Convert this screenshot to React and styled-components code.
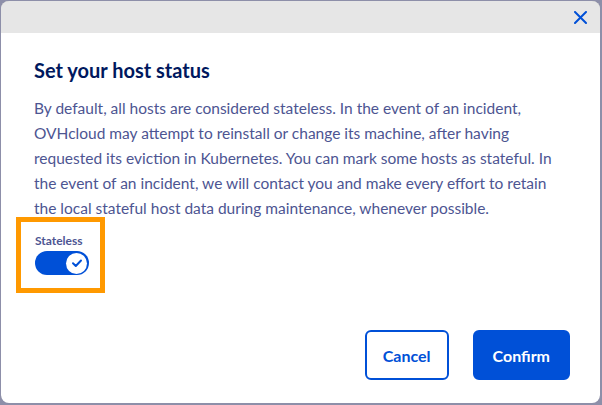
import styled, { createGlobalStyle } from "styled-components";

const GlobalStyle = createGlobalStyle`
  html, body {
    margin: 0;
    padding: 0;
    background: #8d8fa9;
    font-family: Lato, "Open Sans", sans-serif;
  }
`;

const Backdrop = styled.div`
  width: 602px;
  height: 405px;
  padding: 1px 2px 2px 1px;
  box-sizing: border-box;
`;

const Modal = styled.div`
  width: 599px;
  height: 402px;
  background: #fff;
  border-radius: 8px;
  overflow: hidden;
  display: flex;
  flex-direction: column;
  box-shadow: inset 0 1px 0 #9a9a9a;
`;

const Header = styled.div`
  height: 32px;
  background: #e6e6e6;
  display: flex;
  justify-content: flex-end;
  align-items: center;
  padding: 0 12px;
`;

const CloseButton = styled.button`
  border: 0;
  background: none;
  padding: 0;
  width: 16px;
  height: 16px;
  display: flex;
  align-items: center;
  justify-content: center;
  cursor: pointer;
`;

const Content = styled.div`
  flex: 1;
  padding: 23px 33px 0;
  display: flex;
  flex-direction: column;
`;

const Title = styled.h2`
  margin: 0 0 12px;
  font-size: 20px;
  font-weight: 700;
  color: #00185e;
  line-height: 28px;
`;

const Text = styled.p`
  margin: 0;
  font-size: 15.5px;
  line-height: 25px;
  color: #4d5592;
`;

const Highlight = styled.div`
  align-self: flex-start;
  margin: -4px 0 0 -18px;
  padding: 12px 11px 13px 14px;
  border: 5px solid #ff9900;
  display: flex;
  flex-direction: column;
  gap: 3px;
`;

const Label = styled.span`
  font-size: 12px;
  font-weight: 700;
  color: #4d5592;
  line-height: 14px;
`;

const Switch = styled.div`
  width: 54px;
  height: 24px;
  border-radius: 12px;
  background: ${(p) => (p.$on ? "#0050d7" : "#b3b3b3")};
  display: flex;
  align-items: center;
  justify-content: ${(p) => (p.$on ? "flex-end" : "flex-start")};
  padding: 0 2px;
  box-sizing: border-box;
`;

const Knob = styled.span`
  width: 21px;
  height: 21px;
  border-radius: 50%;
  background: #fff;
  display: flex;
  align-items: center;
  justify-content: center;
`;

const Footer = styled.div`
  margin-top: auto;
  display: flex;
  justify-content: flex-end;
  gap: 24px;
  padding: 0 30px 23px;
`;

const Button = styled.button`
  height: 50px;
  padding: 0 ${(p) => (p.$primary ? "18px" : "16px")};
  border-radius: 6px;
  font-family: Lato, "Open Sans", sans-serif;
  font-size: 16px;
  font-weight: 700;
  border: 2px solid #0050d7;
  background: ${(p) => (p.$primary ? "#0050d7" : "#fff")};
  color: ${(p) => (p.$primary ? "#fff" : "#0050d7")};
  cursor: pointer;
`;

export default function App() {
  return (
    <>
      <GlobalStyle />
      <Backdrop>
        <Modal>
          <Header>
            <CloseButton aria-label="Close">
              <svg width="13" height="13" viewBox="0 0 13 13">
                <path
                  d="M1 1L12 12M12 1L1 12"
                  stroke="#0050d7"
                  strokeWidth="2"
                  strokeLinecap="round"
                />
              </svg>
            </CloseButton>
          </Header>
          <Content>
            <Title>Set your host status</Title>
            <Text>
              By default, all hosts are considered stateless. In the event of an
              incident, OVHcloud may attempt to reinstall or change its machine,
              after having requested its eviction in Kubernetes. You can mark
              some hosts as stateful. In the event of an incident, we will
              contact you and make every effort to retain the local stateful
              host data during maintenance, whenever possible.
            </Text>
            <Highlight>
              <Label>Stateless</Label>
              <Switch $on>
                <Knob>
                  <svg width="12" height="12" viewBox="0 0 12 12">
                    <path
                      d="M2 6.3L4.8 9L10 3.5"
                      fill="none"
                      stroke="#0050d7"
                      strokeWidth="2"
                      strokeLinecap="round"
                      strokeLinejoin="round"
                    />
                  </svg>
                </Knob>
              </Switch>
            </Highlight>
          </Content>
          <Footer>
            <Button>Cancel</Button>
            <Button $primary>Confirm</Button>
          </Footer>
        </Modal>
      </Backdrop>
    </>
  );
}
